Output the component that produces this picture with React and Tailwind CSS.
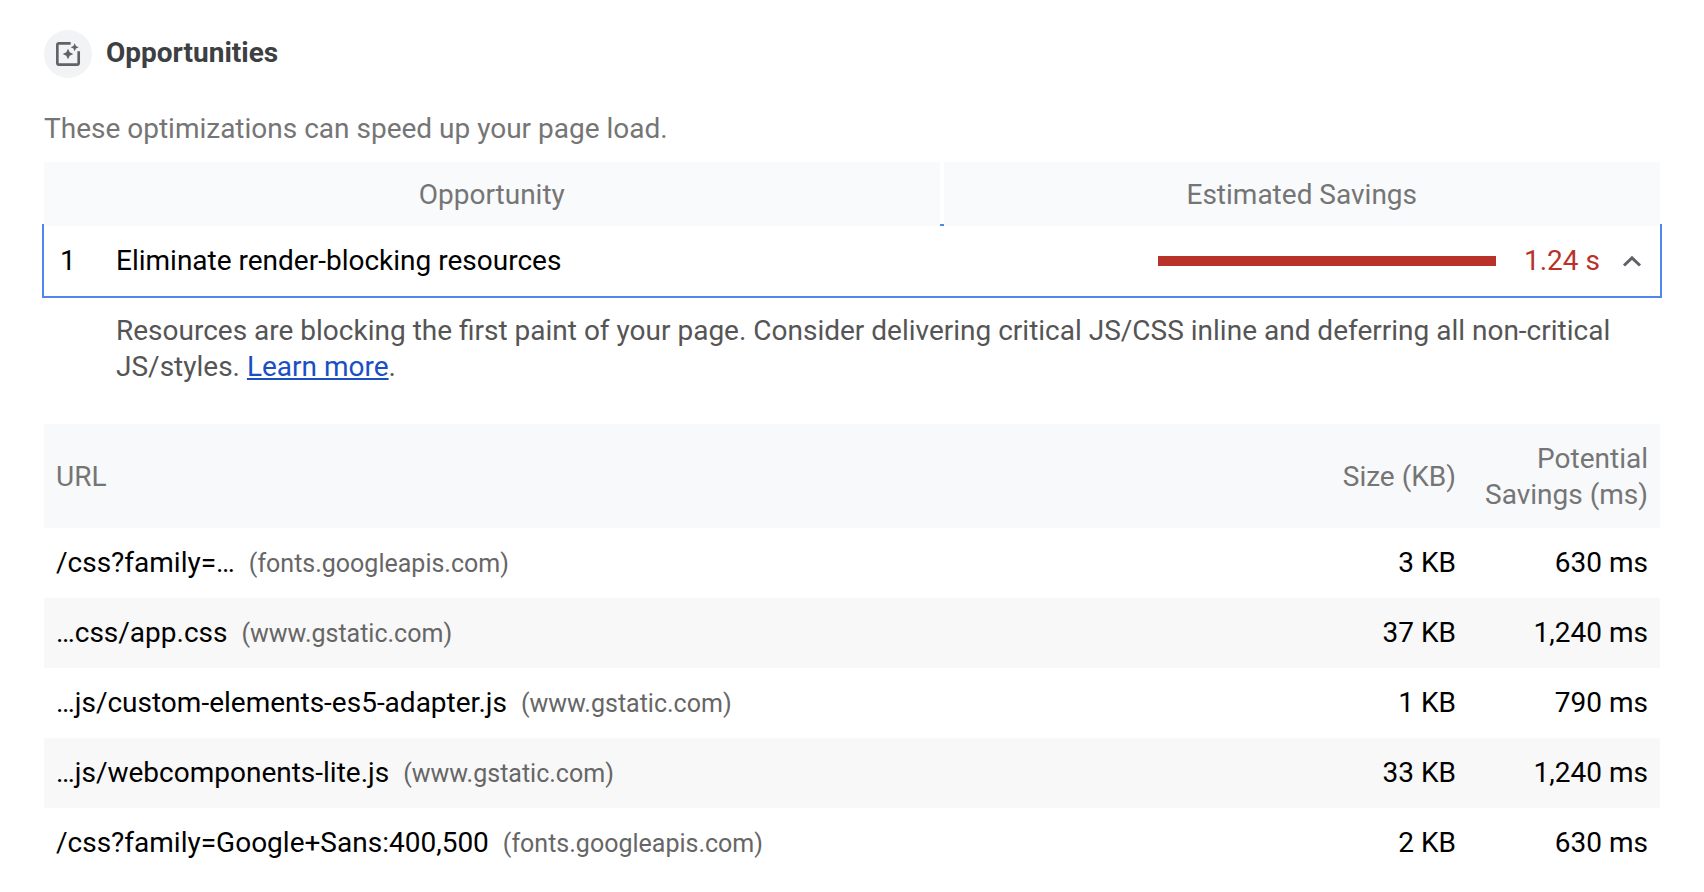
import { MdPhotoFilter } from "react-icons/md";

const resources = [
  { path: "/css?family=…", host: "fonts.googleapis.com", size: "3 KB", savings: "630 ms" },
  { path: "…css/app.css", host: "www.gstatic.com", size: "37 KB", savings: "1,240 ms" },
  { path: "…js/custom-elements-es5-adapter.js", host: "www.gstatic.com", size: "1 KB", savings: "790 ms" },
  { path: "…js/webcomponents-lite.js", host: "www.gstatic.com", size: "33 KB", savings: "1,240 ms" },
  { path: "/css?family=Google+Sans:400,500", host: "fonts.googleapis.com", size: "2 KB", savings: "630 ms" },
];

function SectionHeading() {
  return (
    <header className="flex items-center gap-3.5">
      <span className="flex size-12 items-center justify-center rounded-full bg-[#f1f3f4] text-[#5f6368]">
        <MdPhotoFilter className="size-8" aria-hidden="true" />
      </span>
      <h2 className="pb-0.5 font-bold text-[#3c4043]">Opportunities</h2>
    </header>
  );
}

function OpportunityRow() {
  return (
    <button
      type="button"
      aria-expanded="true"
      aria-controls="opportunity-details"
      className="-mx-0.5 -mt-0.5 flex items-center border-2 border-[#4f87ec] py-[17px] pr-[18px] pl-4 text-left text-black"
    >
      <span className="w-14">1</span>
      <span className="flex-1">Eliminate render-blocking resources</span>
      <span className="h-2.5 w-[338px] bg-[#b8322a]" />
      <span className="w-[104px] text-right text-[#b8322a]">1.24 s</span>
      <svg viewBox="0 0 20 12" className="ml-[22px] h-3 w-5" fill="none" stroke="#5f6368" strokeWidth="3" aria-hidden="true">
        <path d="M2 10.5 10 2.8 18 10.5" />
      </svg>
    </button>
  );
}

function ResourceTable() {
  return (
    <table className="mt-[39px] w-full text-black">
      <thead className="bg-[#f8f9fb] text-[#757575]">
        <tr>
          <th scope="col" className="px-3 pt-[17px] pb-[15px] text-left font-normal">URL</th>
          <th scope="col" className="w-44 px-3 pt-[17px] pb-[15px] text-right font-normal">Size (KB)</th>
          <th scope="col" className="w-48 px-3 pt-[17px] pb-[15px] text-right font-normal">Potential Savings (ms)</th>
        </tr>
      </thead>
      <tbody>
        {resources.map((item) => (
          <tr key={item.path} className="even:bg-[#f8f8f8]">
            <td className="px-3 py-[17px]">
              {item.path}
              <span className="ml-3.5 text-[25px] leading-none text-[#666666]">({item.host})</span>
            </td>
            <td className="px-3 py-[17px] text-right">{item.size}</td>
            <td className="px-3 py-[17px] text-right">{item.savings}</td>
          </tr>
        ))}
      </tbody>
    </table>
  );
}

export default function App() {
  return (
    <main className="flex min-h-screen flex-col bg-white px-11 pt-[30px] pb-3.5 font-[Roboto,sans-serif] text-[28px] leading-9">
      <SectionHeading />
      <p className="mt-[33px] text-[#757575]">These optimizations can speed up your page load.</p>
      <section className="mt-[15px] flex flex-col">
        <div className="relative z-10 grid grid-cols-[5fr_4fr] gap-1 text-center text-[#757575]">
          <div className="bg-[#f9fafc] pt-[15px] pb-[13px]">Opportunity</div>
          <div className="bg-[#f9fafc] pt-[15px] pb-[13px]">Estimated Savings</div>
        </div>
        <OpportunityRow />
        <div id="opportunity-details">
          <p className="mt-[15px] pr-9 pl-[72px] text-[#555555]">
            Resources are blocking the first paint of your page. Consider delivering critical JS/CSS inline and deferring all non-critical JS/styles.{" "}
            <a href="#learn-more" className="text-[#1a4fc4] underline">Learn more</a>.
          </p>
          <ResourceTable />
        </div>
      </section>
    </main>
  );
}
